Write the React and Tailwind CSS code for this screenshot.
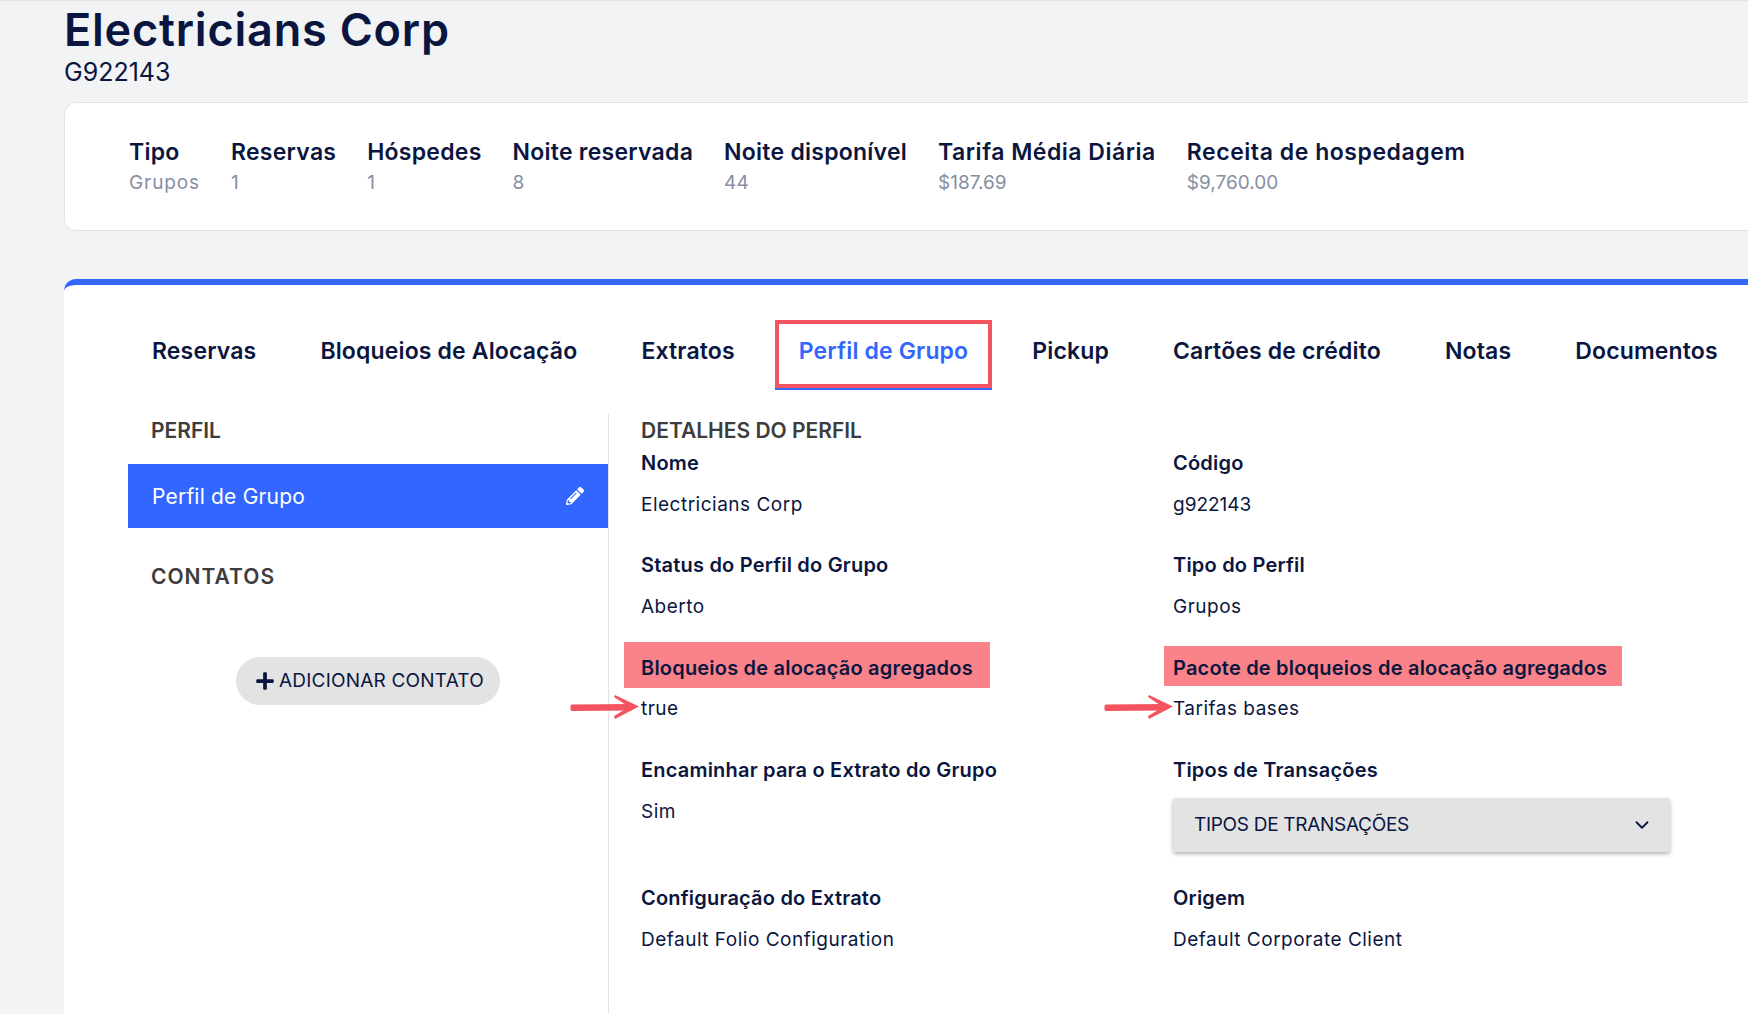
import { ChevronDown } from "lucide-react";
import { FaPencilAlt, FaPlus } from "react-icons/fa";

const navy = "text-[#0b1640]";

const stats = [
  { label: "Tipo", value: "Grupos", valueTrack: "tracking-[0.9px]" },
  { label: "Reservas", value: "1" },
  { label: "Hóspedes", value: "1" },
  { label: "Noite reservada", value: "8" },
  { label: "Noite disponível", value: "44" },
  { label: "Tarifa Média Diária", value: "$187.69", labelTrack: "tracking-[0.5px]" },
  { label: "Receita de hospedagem", value: "$9,760.00", labelTrack: "tracking-[0.55px]" },
];

const tabs = [
  "Reservas",
  "Bloqueios de Alocação",
  "Extratos",
  "Perfil de Grupo",
  "Pickup",
  "Cartões de crédito",
  "Notas",
  "Documentos",
];

function Arrow({ className }) {
  return (
    <svg className={className} width="72" height="26" viewBox="0 0 72 26" fill="none">
      <path d="M3 12 L62 11.5 L62 15 L3 15.5 Z" fill="#f4545f" stroke="#f4545f" strokeWidth="3" strokeLinejoin="round" />
      <path d="M46 1 L70 12.5 L46 25 L45 22 L60 13 L45 3 Z" fill="#f4545f" />
    </svg>
  );
}

function Field({ label, value, height, children, highlight, arrow, tight }) {
  return (
    <div className={`relative pt-[2px] ${height}`}>
      {highlight}
      <div className={`relative h-[30px] text-[20px] leading-[30px] font-semibold tracking-[0.2px] whitespace-nowrap ${navy}`}>{label}</div>
      {value && (
        <div className={`relative h-[30px] text-[19px] leading-[30px] tracking-[0.5px] ${tight ? "mt-[11px]" : "mt-[12px]"} ${navy}`}>
          {arrow}
          {value}
        </div>
      )}
      {children}
    </div>
  );
}

export default function App() {
  return (
    <div className="h-screen overflow-hidden bg-[#f2f3f5] border-t border-[#e2e3e5] pl-[64px] font-['Inter',sans-serif] flex flex-col">
      <h1 className={`h-[57px] text-[45px] leading-[57px] font-semibold tracking-[0.8px] ${navy}`}>Electricians Corp</h1>
      <div className={`h-[28px] text-[25px] leading-[28px] ${navy}`}>G922143</div>

      <div className="mt-4 mr-[-20px] h-[129px] shrink-0 rounded-l-xl border border-[#e2e3e5] bg-white pl-[64px] pt-[31px] flex gap-[31px]">
        {stats.map((s) => (
          <div key={s.label}>
            <div className={`h-[36px] text-[23px] leading-[36px] font-semibold whitespace-nowrap ${navy} ${s.labelTrack || "tracking-[0.25px]"}`}>{s.label}</div>
            <div className={`h-[26px] text-[19px] leading-[26px] text-[#868ea3] ${s.valueTrack || ""}`}>{s.value}</div>
          </div>
        ))}
      </div>

      <div className="mt-[48px] mr-[-20px] flex-1 rounded-tl-xl border-t-[6px] border-[#3366ff] bg-white pl-[64px] pt-[35px] flex flex-col">
        <div className="flex h-[70px] shrink-0 gap-4">
          {tabs.map((t) => {
            const active = t === "Perfil de Grupo";
            return (
              <div
                key={t}
                className={`relative h-[70px] px-6 pt-[15px] text-[23px] leading-[32px] font-semibold tracking-[0.15px] whitespace-nowrap ${
                  active ? "border-b-[5px] border-[#3366ff] text-[#3366ff]" : navy
                }`}
              >
                {t}
                {active && <div className="absolute left-0 right-0 top-0 h-[68px] border-4 border-[#f4545f]" />}
              </div>
            );
          })}
        </div>

        <div className="mt-[24px] flex flex-1">
          <div className="w-[481px] shrink-0 border-r border-[#e2e3e5]">
            <div className="h-[32px] pl-[23px] pt-[1px] text-[21px] leading-[32px] font-semibold text-[#3d3d3d]">PERFIL</div>
            <div className="mt-[18px] flex h-[64px] items-center justify-between bg-[#3366ff] pl-[24px] pr-[24px] pt-[2px] text-[21px] tracking-[0.2px] text-white">
              Perfil de Grupo
              <FaPencilAlt size={18} className="mt-[-2px]" />
            </div>
            <div className="mt-[32px] h-[32px] pl-[23px] pt-[1px] text-[21px] leading-[32px] font-semibold tracking-[1px] text-[#3d3d3d]">CONTATOS</div>
            <button className={`mx-auto mt-[65px] flex h-[48px] w-[264px] items-center justify-center gap-[4px] rounded-full bg-[#e3e3e3] pl-[3px] text-[19px] tracking-[0.2px] ${navy}`}>
              <FaPlus size={20} />
              ADICIONAR CONTATO
            </button>
          </div>

          <div className="flex-1 pl-[32px]">
            <div className="h-[32px] pt-[1px] text-[21px] leading-[32px] font-semibold text-[#3d3d3d]">DETALHES DO PERFIL</div>
            <div className="grid grid-cols-[532px_1fr]">
              <Field height="h-[102px]" label="Nome" value="Electricians Corp" />
              <Field height="h-[102px]" label="Código" value={<span className="tracking-normal">g922143</span>} />
              <Field height="h-[103px]" label="Status do Perfil do Grupo" value="Aberto" />
              <Field height="h-[103px]" label="Tipo do Perfil" value="Grupos" />
              <Field
                height="h-[102px]"
                label="Bloqueios de alocação agregados"
                value="true"
                tight
                highlight={<div className="absolute left-[-17px] top-[-9px] h-[46px] w-[366px] bg-[#f98389]" />}
                arrow={<Arrow className="absolute left-[-72px] top-[0px]" />}
              />
              <Field
                height="h-[102px]"
                label="Pacote de bloqueios de alocação agregados"
                value="Tarifas bases"
                tight
                highlight={<div className="absolute left-[-9px] top-[-5px] h-[40px] w-[458px] bg-[#f98389]" />}
                arrow={<Arrow className="absolute left-[-70px] top-[0px]" />}
              />
              <Field height="h-[128px]" label="Encaminhar para o Extrato do Grupo" value="Sim" />
              <Field height="h-[128px]" label="Tipos de Transações">
                <div className={`mt-[13px] flex h-[54px] w-[497px] items-center justify-between rounded-[3px] bg-[#e3e3e3] pl-[21px] pr-[17px] text-[19px] tracking-[-0.3px] shadow-[0_2px_4px_rgba(0,0,0,0.3)] ${navy}`}>
                  TIPOS DE TRANSAÇÕES
                  <ChevronDown size={22} />
                </div>
              </Field>
              <Field height="h-[90px]" label="Configuração do Extrato" value="Default Folio Configuration" />
              <Field height="h-[90px]" label="Origem" value="Default Corporate Client" />
            </div>
          </div>
        </div>
      </div>
    </div>
  );
}
